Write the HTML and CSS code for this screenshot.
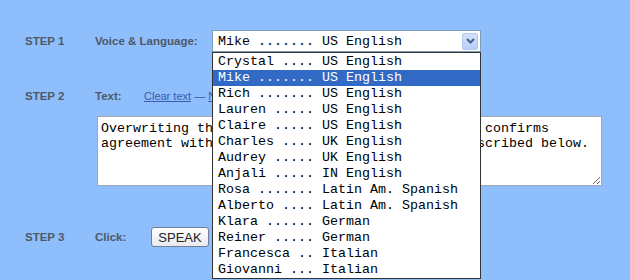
FILE: index.html
```html
<!DOCTYPE html>
<html lang="en">
<head>
    <meta charset="UTF-8">
    <title>Text to Speech</title>
    <link rel="stylesheet" href="styles.css">
</head>
<body>
    <div class="form">
        <!-- step 1: voice -->
        <div class="row row1">
            <span class="step">STEP 1</span>
            <span class="label label1">Voice &amp; Language:</span>
            <div class="select">
                <span class="value">Mike ....... US English</span>
                <span class="arrow">
                    <svg width="9" height="6" viewBox="0 0 9 6"><path d="M1 1 L4.5 4.5 L8 1" fill="none" stroke="#4a5f8c" stroke-width="2"/></svg>
                </span>
                <ul class="options">
                    <li>Crystal .... US English</li>
                    <li class="current">Mike ....... US English</li>
                    <li>Rich ....... US English</li>
                    <li>Lauren ..... US English</li>
                    <li>Claire ..... US English</li>
                    <li>Charles .... UK English</li>
                    <li>Audrey ..... UK English</li>
                    <li>Anjali ..... IN English</li>
                    <li>Rosa ....... Latin Am. Spanish</li>
                    <li>Alberto .... Latin Am. Spanish</li>
                    <li>Klara ...... German</li>
                    <li>Reiner ..... German</li>
                    <li>Francesca .. Italian</li>
                    <li>Giovanni ... Italian</li>
                </ul>
            </div>
        </div>

        <!-- step 2: text -->
        <div class="row row2">
            <span class="step">STEP 2</span>
            <span class="label label2">Text:</span>
            <span class="links"><a href="#">Clear text</a> &mdash; <a href="#">New sample</a></span>
        </div>
        <textarea class="text">Overwriting the sample text shown in this field confirms
agreement with the usage terms and the rules described below.</textarea>

        <!-- step 3: speak -->
        <div class="row row3">
            <span class="step">STEP 3</span>
            <span class="label label3">Click:</span>
            <button class="speak">SPEAK</button>
        </div>
    </div>
</body>
</html>
```

FILE: styles.css
```css
*{
    margin: 0;
    padding: 0;
    box-sizing: border-box;
}

ul{
    list-style-type: none;
}

body{
    background: #8fbefc;
    font-family: "Liberation Sans", Arial, sans-serif;
    min-height: 320px;
}

.form{
    padding: 30px 0 0 25px;
}

.row{
    display: flex;
    align-items: center;
}

.step, .label{
    font-size: 11.5px;
    font-weight: bold;
    color: #4c5969;
}

.step{
    width: 70px;
}

.row1{
    height: 22px;
}

.label1{
    width: 117px;
}

.select{
    position: relative;
    z-index: 2;
    width: 269px;
    height: 22px;
    background: #ffffff;
    border: 1px solid #7f9db9;
    display: flex;
    align-items: center;
    justify-content: space-between;
    padding: 0 2px 0 5px;
    font-family: "Liberation Mono", "Courier New", monospace;
    font-size: 13.33px;
    color: #000000;
}

.select .arrow{
    width: 16px;
    height: 17px;
    background: linear-gradient(#d3e1fd, #b9cffa);
    border: 1px solid #b4c8f0;
    border-radius: 2px;
    display: flex;
    align-items: center;
    justify-content: center;
}

/* open dropdown list, lies over the page */
.options{
    position: absolute;
    top: 21px;
    left: -1px;
    width: 269px;
    background: #ffffff;
    border: 1px solid #333333;
    padding-top: 1px;
}

.options li{
    height: 16px;
    line-height: 16px;
    padding-left: 5px;
    white-space: pre;
}

.options li.current{
    background: #316ac5;
    color: #ffffff;
}

.row2{
    margin-top: 36px;
    height: 16px;
}

.label2{
    width: 49px;
}

.links{
    font-size: 11px;
    color: #3355aa;
}

.links a{
    color: #3a5bb0;
}

.text{
    display: block;
    margin: 12px 0 0 72px;
    width: 505px;
    height: 70px;
    border: 1px solid #9fa8b4;
    padding: 4px 3px;
    font-family: "Liberation Mono", "Courier New", monospace;
    font-size: 13.33px;
    line-height: 15px;
    color: #000000;
    background: #ffffff;
    overflow: hidden;
    white-space: pre;
}

.row3{
    margin-top: 41px;
    height: 20px;
}

.label3{
    width: 56px;
}

.speak{
    width: 58px;
    height: 20px;
    border: 1px solid #6f7f99;
    border-radius: 3px;
    background: linear-gradient(#ffffff, #e9eaf0);
    font-family: "Liberation Sans", Arial, sans-serif;
    font-size: 13px;
    color: #222222;
}
```
